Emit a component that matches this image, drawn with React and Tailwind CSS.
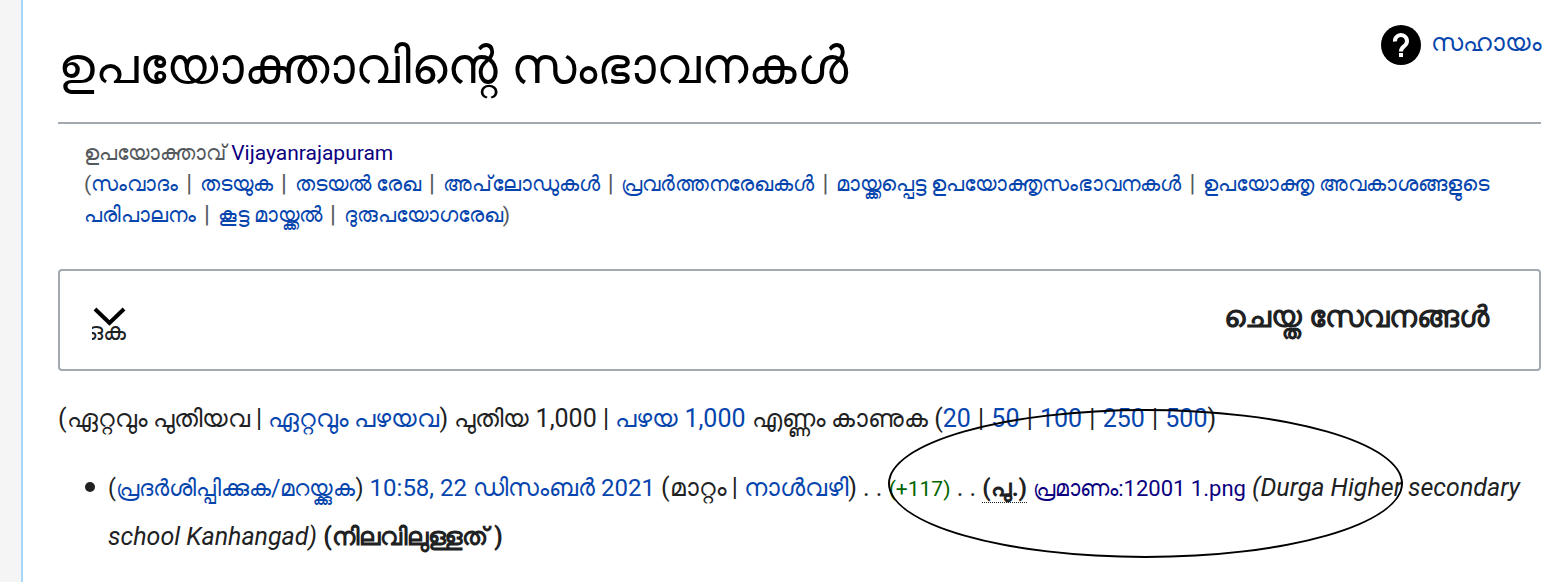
import { Fragment } from "react";

const USER_TOOLS = [
  "സംവാദം",
  "തടയുക",
  "തടയൽ രേഖ",
  "അപ്‌ലോഡുകൾ",
  "പ്രവർത്തനരേഖകൾ",
  "മായ്ക്കപ്പെട്ട ഉപയോക്തൃസംഭാവനകൾ",
  "ഉപയോക്തൃ അവകാശങ്ങളുടെ പരിപാലനം",
  "കൂട്ട മായ്ക്കൽ",
  "ദുരുപയോഗരേഖ"
];

const LIMITS = ["20", "50", "100", "250", "500"];

const WikiLink = ({ children, visited = false }) => (
  <a href="#" className={visited ? "text-[#0b0080]" : "text-[#0645ad]"}>
    {children}
  </a>
);

const LinkList = ({ items, separatorClassName }) => (
  <>
    {items.map((item, index) => (
      <Fragment key={item}>
        {index > 0 && <span className={separatorClassName}> | </span>}
        <WikiLink>{item}</WikiLink>
      </Fragment>
    ))}
  </>
);

const HelpLink = () => (
  <a href="#" className="flex shrink-0 items-start gap-2.5 pt-[25px] text-[#0645ad]">
    <svg viewBox="0 0 40 40" className="size-10" aria-hidden="true">
      <circle cx="20" cy="20" r="20" />
      <path fill="none" stroke="#fff" strokeWidth="4" d="M14 16.500a6 6 0 1 1 10.300 3.600C22 22.300 20 23 20 26.500" />
      <path fill="#fff" d="M18 28h4v4h-4z" />
    </svg>
    <span className="text-[25px] leading-9">സഹായം</span>
  </a>
);

const SearchPanel = () => (
  <section className="mt-[38px] flex h-[102px] items-center justify-between rounded border-2 border-[#a2a9b1] pr-[50px] pl-8">
    <button type="button" className="relative h-10 w-9 overflow-hidden text-[#202122]">
      <svg viewBox="0 0 36 40" className="absolute inset-0" fill="none" stroke="#000" strokeWidth="4" aria-hidden="true">
        <path d="M3 9 17.500 23 32 9" />
      </svg>
      <span className="absolute top-[18px] -left-1.5 text-[24px] leading-7 whitespace-nowrap">ഒക</span>
    </button>
    <h2 className="pb-1.5 text-[30px] leading-10 font-bold text-[#202122]">ചെയ്ത സേവനങ്ങൾ</h2>
  </section>
);

const Contributions = () => (
  <div className="relative text-[25px] text-[#202122]">
    <p className="mt-7 leading-10">
      (ഏറ്റവും പുതിയവ | <WikiLink>ഏറ്റവും പഴയവ</WikiLink>) പുതിയ 1,000 | <WikiLink>പഴയ 1,000</WikiLink> എണ്ണം കാണുക (
      <LinkList items={LIMITS} separatorClassName="mx-px" />)
    </p>
    <ul className="mt-[25px] pl-[27px] leading-[48px]">
      <li className="flex items-start gap-[13px]">
        <span className="mt-[18px] size-2.5 shrink-0 rounded-full bg-[#202122]" />
        <div>
          <span className="text-[23px]">(<WikiLink>പ്രദർശിപ്പിക്കുക/മറയ്ക്കുക</WikiLink>)</span>{" "}
          <span className="text-[24px]"><WikiLink>10:58, 22 ഡിസംബർ 2021</WikiLink></span> (മാറ്റം | <WikiLink>നാൾവഴി</WikiLink>) . .{" "}
          <span className="text-[21px] text-[#006400]">(+117)</span> . .{" "}
          <abbr title="പുതിയ താൾ" className="border-b border-dotted border-[#202122] text-[24px] font-bold no-underline">(പു.)</abbr>{" "}
          <span className="text-[22px]"><WikiLink visited>പ്രമാണം:12001 1.png</WikiLink></span>{" "}
          <i>(Durga Higher secondary school Kanhangad)</i> <b>(നിലവിലുള്ളത് )</b>
        </div>
      </li>
    </ul>
    {/* ellipse marker over the new entry */}
    <div className="pointer-events-none absolute top-[10px] left-[830px] h-[149px] w-[515px] rounded-[50%] border-2 border-black" />
  </div>
);

export default function App() {
  return (
    <div className="flex bg-[#f5f5f5] pl-[21px] font-[Roboto,'Noto_Sans',sans-serif]">
      <main className="min-h-screen min-w-0 flex-1 border-l-2 border-[#a7d7f9] bg-white pr-[23px] pl-[35px]">
        <header className="flex h-[124px] items-start justify-between border-b-2 border-[#a2a9b1]">
          <h1 className="pt-[30px] text-[51px] leading-[72px] text-black">ഉപയോക്താവിന്റെ സംഭാവനകൾ</h1>
          <HelpLink />
        </header>
        <div className="mt-[14px] px-[26px] text-[21px] leading-[31px] text-[#54595d]">
          ഉപയോക്താവ് <WikiLink visited>Vijayanrajapuram</WikiLink>
          <br />
          (<LinkList items={USER_TOOLS} separatorClassName="mx-0.5 text-[24px] leading-none" />)
        </div>
        <SearchPanel />
        <Contributions />
      </main>
    </div>
  );
}
